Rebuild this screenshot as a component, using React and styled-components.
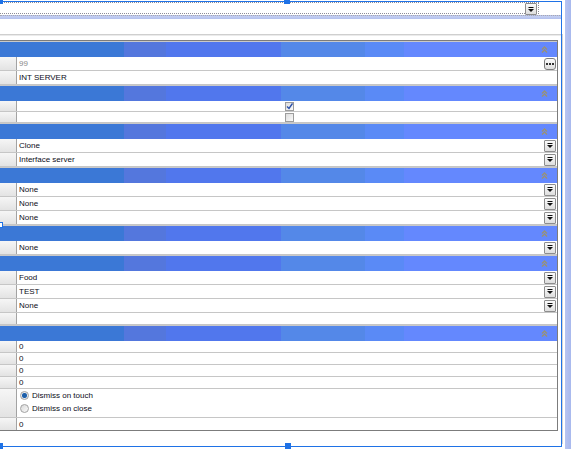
import React from "react";
import styled, { createGlobalStyle } from "styled-components";

const GlobalStyle = createGlobalStyle`
  * { box-sizing: border-box; }
  html, body { margin: 0; padding: 0; background: #fff; overflow: hidden; }
  body { font-family: "Liberation Sans", Arial, sans-serif; }
`;

const BAND_BG = `linear-gradient(to right,
  #3b78d6 0 124px, #5477dd 124px 166px, #5177ed 166px 281px,
  #5488e8 281px 365px, #5a8af6 365px 404px, #6488fe 404px)`;

const Page = styled.div`
  position: relative;
  width: 571px;
  height: 449px;
  overflow: hidden;
  display: flex;
  background: #fff;
`;

const Main = styled.div`
  width: 565px;
  display: flex;
  flex-direction: column;
`;

const RightStrip = styled.div`
  flex: 1;
  background: linear-gradient(to right, #b7c4f0, #a9b9ee);
`;

const TopBar = styled.div`
  height: 15px;
  padding-top: 2px;
`;

const Combo = styled.div`
  width: 539px;
  height: 12px;
  display: flex;
  justify-content: flex-end;
  border: 1px dotted #8c8c96;
  border-left: none;
  padding-right: 1px;
`;

const BlueStrip = styled.div`
  height: 4px;
  width: 562px;
  background: linear-gradient(#c7d1f2, #b2c0ee);
  border-top: 1px dotted #a8a8b0;
`;

const Body = styled.div`
  flex: 1;
  padding-top: 15px;
`;

const Outer = styled.div`
  width: 563px;
  height: 410px;
  border-top: 1px solid #cfcfcf;
  border-right: 1px solid #d4d4d4;
  box-shadow: inset 0 1px 0 #ebebeb;
  padding-top: 5px;
`;

const Grid = styled.div`
  width: 558px;
  border: 1px solid #7c7c7c;
  border-left: none;
  font-size: 8px;
  color: #0c0c18;
`;

const Band = styled.div`
  height: 16px;
  border-top: 1px solid #c9c9c9;
  background: ${BAND_BG};
  display: flex;
  justify-content: flex-end;
  align-items: center;
  padding-right: 9px;
`;

const Row = styled.div`
  display: grid;
  grid-template-columns: 17px 1fr;
  height: ${(p) => p.$h || 14}px;
  border-bottom: 1px solid #c6c6c6;
  &:last-child { border-bottom: none; }
`;

const Stub = styled.div`
  background: linear-gradient(#f6f6f6, #e3e3e3);
  border-right: 1px solid #a3a3a3;
`;

const Cell = styled.div`
  display: flex;
  align-items: center;
  justify-content: space-between;
  padding: 0 1px 0 2px;
  color: ${(p) => (p.$muted ? "#8a8a8a" : "inherit")};
  white-space: nowrap;
`;

const RadioCell = styled.div`
  display: flex;
  flex-direction: column;
  gap: 3px;
  padding: 1px 0 0 3px;
  white-space: nowrap;
`;

const DropButton = styled.div`
  width: 12px;
  height: 12px;
  border: 1px solid #8d8d8d;
  border-radius: 1px;
  background: linear-gradient(#fbfbfb, #dedede);
  display: flex;
  align-items: center;
  justify-content: center;
  flex-shrink: 0;
`;

const DotsButton = styled(DropButton)`
  border-radius: 3px;
  border-color: #7d7d7d;
`;

const Check = styled.div`
  width: 9px;
  height: 9px;
  margin-left: 266px;
  border: 1px solid #9c9c9c;
  background: linear-gradient(135deg, #dcdcdc, #fafafa);
  display: flex;
  align-items: center;
  justify-content: center;
`;

const RadioLine = styled.label`
  display: flex;
  align-items: center;
  gap: 3px;
  height: 10px;
`;

const Radio = styled.span`
  width: 9px;
  height: 9px;
  border-radius: 50%;
  border: 1px solid #a2a2a2;
  background: ${(p) =>
    p.$on
      ? "radial-gradient(circle, #1f5fa8 0 2px, #5d93d2 2.5px, #e8e8e8 3px)"
      : "linear-gradient(135deg, #d8d8d8, #fafafa)"};
`;

const Frame = styled.div`
  position: absolute;
  left: -10px;
  top: 1px;
  width: 572px;
  height: 446px;
  border: 1px solid #1f72e6;
  pointer-events: none;
`;

const Handle = styled.div`
  position: absolute;
  width: 6px;
  height: 6px;
  background: ${(p) => (p.$hollow ? "#fff" : "#1f72e6")};
  border: 1px solid #1f72e6;
`;

const Chevron = () => (
  <svg width="7" height="7" viewBox="0 0 7 7">
    <path d="M1 3.5 L3.5 1 L6 3.5 M1 6.5 L3.5 4 L6 6.5" fill="none" stroke="#9a9274" strokeWidth="1.3" />
  </svg>
);

const Arrow = () => (
  <svg width="6" height="5" viewBox="0 0 6 5">
    <rect x="0.5" y="0" width="5" height="1" fill="#111" />
    <path d="M0 2 H6 L3 5 Z" fill="#111" />
  </svg>
);

const Dots = () => (
  <svg width="8" height="3" viewBox="0 0 8 3">
    <rect x="0" y="1" width="2" height="2" fill="#333" />
    <rect x="3" y="1" width="2" height="2" fill="#333" />
    <rect x="6" y="1" width="2" height="2" fill="#333" />
  </svg>
);

const Tick = () => (
  <svg width="7" height="7" viewBox="0 0 7 7">
    <path d="M1 3.5 L3 5.5 L6.5 0.5" fill="none" stroke="#2a4fa8" strokeWidth="1.4" />
  </svg>
);

const Section = ({ children }) => (
  <>
    <Band>
      <Chevron />
    </Band>
    {children}
  </>
);

const TextRow = ({ text, h, muted, button }) => (
  <Row $h={h}>
    <Stub />
    <Cell $muted={muted}>
      <span>{text}</span>
      {button}
    </Cell>
  </Row>
);

const SelectRow = ({ text }) => (
  <TextRow text={text} button={<DropButton><Arrow /></DropButton>} />
);

const CheckRow = ({ checked }) => (
  <Row $h={11}>
    <Stub />
    <Cell>
      <Check>{checked && <Tick />}</Check>
    </Cell>
  </Row>
);

export default function App() {
  return (
    <>
      <GlobalStyle />
      <Page>
        <Main>
          <TopBar>
            <Combo>
              <DropButton><Arrow /></DropButton>
            </Combo>
          </TopBar>
          <BlueStrip />
          <Body>
            <Outer>
              <Grid>
                <Section>
                  <TextRow text="99" muted button={<DotsButton><Dots /></DotsButton>} />
                  <TextRow text="INT SERVER" />
                </Section>
                <Section>
                  <CheckRow checked />
                  <CheckRow />
                </Section>
                <Section>
                  <SelectRow text="Clone" />
                  <SelectRow text="Interface server" />
                </Section>
                <Section>
                  <SelectRow text="None" />
                  <SelectRow text="None" />
                  <SelectRow text="None" />
                </Section>
                <Section>
                  <SelectRow text="None" />
                </Section>
                <Section>
                  <SelectRow text="Food" />
                  <SelectRow text="TEST" />
                  <SelectRow text="None" />
                  <TextRow text="" h={12} />
                </Section>
                <Section>
                  <TextRow text="0" h={12} />
                  <TextRow text="0" h={12} />
                  <TextRow text="0" h={12} />
                  <TextRow text="0" h={12} />
                  <Row $h={29}>
                    <Stub />
                    <RadioCell>
                      <RadioLine><Radio $on />Dismiss on touch</RadioLine>
                      <RadioLine><Radio />Dismiss on close</RadioLine>
                    </RadioCell>
                  </Row>
                  <TextRow text="0" h={12} />
                </Section>
              </Grid>
            </Outer>
          </Body>
        </Main>
        <RightStrip />
        <Frame />
        <Handle style={{ left: -3, top: -2 }} />
        <Handle style={{ left: 284, top: -2 }} />
        <Handle $hollow style={{ left: -3, top: 222 }} />
        <Handle style={{ left: -3, top: 443 }} />
        <Handle style={{ left: 285, top: 443 }} />
      </Page>
    </>
  );
}
